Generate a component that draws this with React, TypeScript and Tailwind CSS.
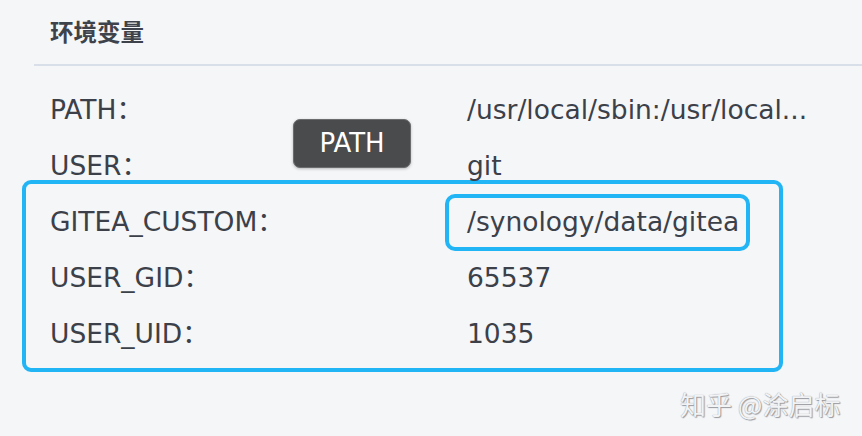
import React from 'react';

interface EnvRow {
  name: string;
  value: string;
}

const topRows: EnvRow[] = [
  { name: 'PATH', value: '/usr/local/sbin:/usr/local...' },
  { name: 'USER', value: 'git' },
];

const Row = ({ name, value, highlight }: EnvRow & { highlight?: boolean }) => (
  <div className="flex h-[56px] items-center">
    <div className="w-[417px] shrink-0">{name}：</div>
    {highlight ? (
      <div className="-ml-[22px] flex h-[57px] items-center rounded-[10px] border-4 border-[#22b5f6] pl-[18px] pr-[7px]">
        {value}
      </div>
    ) : (
      <div>{value}</div>
    )}
  </div>
);

const App = () => {
  return (
    <div
      className="relative h-[436px] w-[862px] overflow-hidden bg-[#f5f6f8] text-[#3b4049]"
      style={{ fontFamily: '"DejaVu Sans", Verdana, "Noto Sans CJK SC", sans-serif' }}
    >
      <div className="pl-[50px] pt-[18px] text-[23.5px] font-bold leading-[30px] text-[#3e434b]">
        环境变量
      </div>
      <div className="ml-[34px] mt-[16px] h-[2px] bg-[#d8dfe8]" />

      <div className="mt-[16px] px-[22px] text-[26.5px]">
        <div className="pl-[28px]">
          {topRows.map((r) => (
            <Row key={r.name} {...r} />
          ))}
        </div>

        <div className="-mt-[14px] w-[761px] rounded-[9px] border-4 border-[#22b5f6] pb-[6px] pl-[24px] pt-[10px]">
          <Row name="GITEA_CUSTOM" value="/synology/data/gitea" highlight />
          <Row name="USER_GID" value="65537" />
          <Row name="USER_UID" value="1035" />
        </div>
      </div>

      {/* hover tooltip */}
      <div className="absolute left-[293px] top-[119px] flex h-[49px] w-[118px] items-center justify-center rounded-[7px] border border-[#6b6c6e] bg-[#4a4b4d] text-[26px] text-white shadow-[0_1px_3px_rgba(0,0,0,0.25)]">
        PATH
      </div>

      <div
        className="absolute left-[680px] top-[384px] text-[26px] text-[#f2f3f5] [text-shadow:_0_0_1px_#8a8d93,_1px_1px_1px_#9a9ca1]"
        style={{ fontFamily: '"Noto Sans CJK SC", sans-serif' }}
      >
        知乎 @涂启标
      </div>
    </div>
  );
};

export default App;
